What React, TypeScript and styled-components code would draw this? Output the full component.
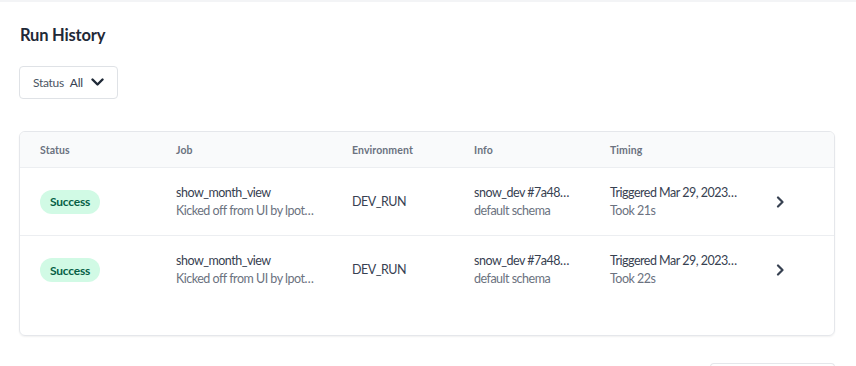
import React from "react";
import styled, { createGlobalStyle } from "styled-components";

const Global = createGlobalStyle`
  html, body { margin: 0; padding: 0; background: #ffffff; }
  body { font-family: Lato, "Noto Sans", "Liberation Sans", sans-serif; color: #374151; }
  * { box-sizing: border-box; }
`;

const TopStrip = styled.div`
  height: 2px;
  background: #f3f4f6;
`;

const Page = styled.main`
  padding: 0 21px 0 19px;
`;

const Title = styled.h1`
  margin: 21px 0 0 1px;
  font-size: 16.5px;
  line-height: 24px;
  font-weight: 700;
  letter-spacing: -0.2px;
  color: #1f2937;
`;

const FilterButton = styled.button`
  margin-top: 19px;
  height: 33px;
  width: 99px;
  display: flex;
  align-items: center;
  gap: 6px;
  padding: 0 0 0 13px;
  border: 1px solid #dfe2e6;
  border-radius: 4px;
  background: #fff;
  font-family: inherit;
  font-size: 12px;
  letter-spacing: -0.3px;
  color: #4b5563;
`;

const FilterValue = styled.span`
  color: #374151;
`;

const Chevron = styled.svg`
  margin-left: 2px;
`;

const Card = styled.section`
  margin-top: 32px;
  border: 1px solid #e5e7eb;
  border-radius: 6px;
  box-shadow: 0 1px 2px rgba(0, 0, 0, 0.06);
  padding-bottom: 31px;
  overflow: hidden;
`;

const Row = styled.div<{ $header?: boolean }>`
  display: grid;
  grid-template-columns: 136px 176px 122px 136px 166px 1fr;
  align-items: center;
  padding-left: 20px;
  height: ${(p) => (p.$header ? "36px" : "68px")};
  background: ${(p) => (p.$header ? "#f9fafb" : "#ffffff")};
  border-bottom: 1px solid #eceef1;
  &:last-child {
    border-bottom: none;
  }
`;

const HeadCell = styled.div`
  font-size: 10.5px;
  font-weight: 700;
  letter-spacing: 0.1px;
  color: #6b7280;
`;

const Cell = styled.div`
  display: flex;
  flex-direction: column;
  gap: 2px;
  font-size: 12.5px;
  line-height: 16px;
  letter-spacing: -0.5px;
  color: #374151;
  white-space: nowrap;
`;

const Sub = styled.span`
  color: #6b7280;
`;

const Pill = styled.span`
  display: inline-flex;
  align-items: center;
  justify-content: center;
  width: 60px;
  height: 24px;
  border-radius: 12px;
  background: #d1fae5;
  color: #065f46;
  font-size: 12px;
  font-weight: 700;
  letter-spacing: -0.2px;
`;

const Arrow = styled.svg`
  display: block;
`;

const BottomButton = styled.div`
  margin: 27px 0 0 auto;
  width: 125px;
  height: 20px;
  border: 1px solid #e5e7eb;
  border-bottom: none;
  border-radius: 4px 4px 0 0;
`;

const runs = [
  { took: "Took 21s" },
  { took: "Took 22s" },
];

export default function App() {
  return (
    <>
      <Global />
      <TopStrip />
      <Page>
        <Title>Run History</Title>
        <FilterButton>
          <span>Status</span>
          <FilterValue>All</FilterValue>
          <Chevron width="13" height="9" viewBox="0 0 13 9">
            <path d="M1.5 1.5 L6.5 6.5 L11.5 1.5" fill="none" stroke="#1f2937" strokeWidth="2.4" strokeLinecap="round" strokeLinejoin="round" />
          </Chevron>
        </FilterButton>
        <Card>
          <Row $header>
            <HeadCell>Status</HeadCell>
            <HeadCell>Job</HeadCell>
            <HeadCell>Environment</HeadCell>
            <HeadCell>Info</HeadCell>
            <HeadCell>Timing</HeadCell>
            <div />
          </Row>
          {runs.map((r, i) => (
            <Row key={i}>
              <div>
                <Pill>Success</Pill>
              </div>
              <Cell>
                <span>show_month_view</span>
                <Sub>Kicked off from UI by lpot…</Sub>
              </Cell>
              <Cell>DEV_RUN</Cell>
              <Cell>
                <span>snow_dev #7a48…</span>
                <Sub>default schema</Sub>
              </Cell>
              <Cell>
                <span>Triggered Mar 29, 2023…</span>
                <Sub>{r.took}</Sub>
              </Cell>
              <Arrow width="9" height="12" viewBox="0 0 9 12">
                <path d="M2 1.5 L6.5 6 L2 10.5" fill="none" stroke="#374151" strokeWidth="2.2" strokeLinecap="round" strokeLinejoin="round" />
              </Arrow>
            </Row>
          ))}
        </Card>
        <BottomButton />
      </Page>
    </>
  );
}
